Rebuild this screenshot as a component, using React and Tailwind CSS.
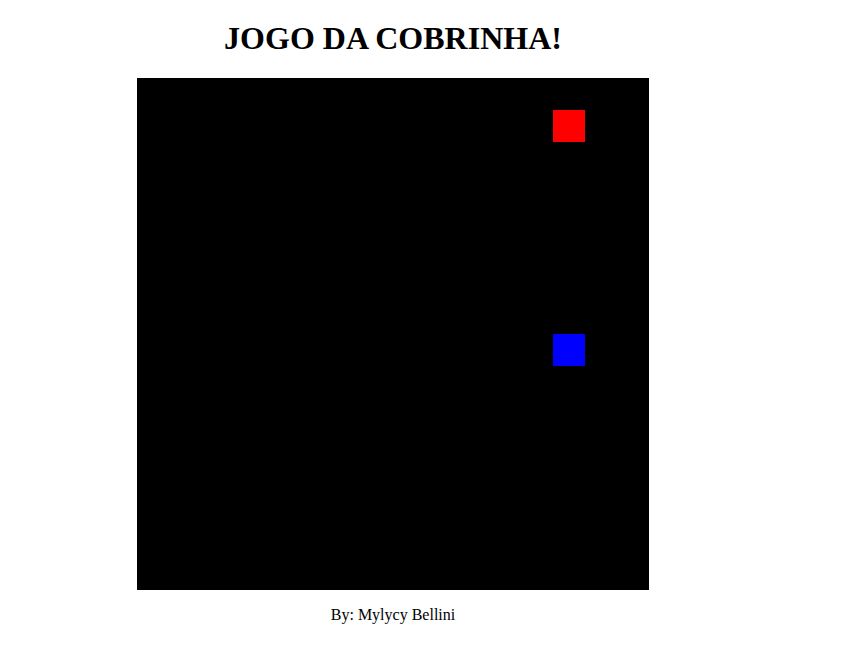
export default function App() {
  return (
    <div className="w-[786px] flex flex-col items-center pt-[20px] bg-white" style={{ fontFamily: '"Liberation Serif", "Times New Roman", serif' }}>
      <h1 className="text-[32px] leading-[37px] font-bold text-black mb-[21px]">JOGO DA COBRINHA!</h1>
      <div className="relative w-[512px] h-[512px] bg-black">
        <div className="absolute left-[416px] top-[32px] w-[32px] h-[32px] bg-[#ff0000]"></div>
        <div className="absolute left-[416px] top-[256px] w-[32px] h-[32px] bg-[#0000ff]"></div>
      </div>
      <p className="mt-[16px] text-[16px] leading-[18px] text-black">By: Mylycy Bellini</p>
    </div>
  );
}
